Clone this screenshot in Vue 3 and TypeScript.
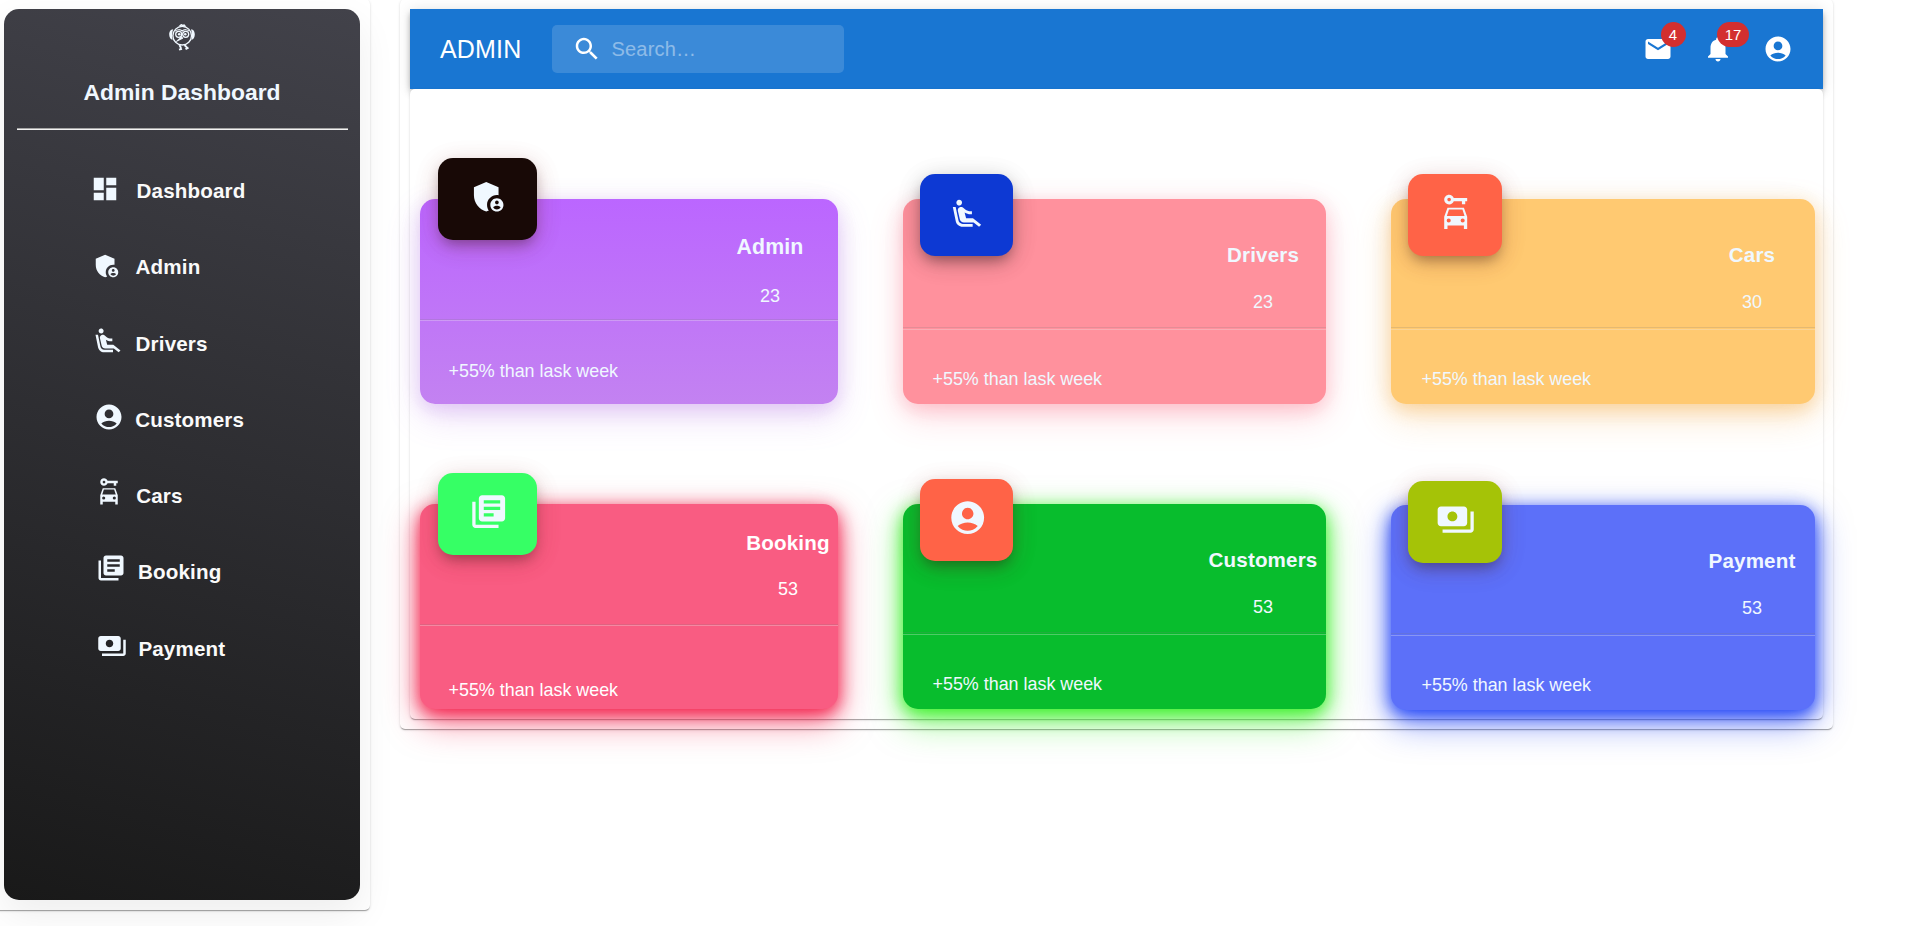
<script setup lang="ts">
interface NavItem {
  key: string
  label: string
  icon: string
}

interface StatCard {
  key: string
  title: string
  value: number
  note: string
  icon: string
}

const icons: Record<string, string> = {
  dashboard: 'M3 13h8V3H3v10zm0 8h8v-6H3v6zm10 0h8V11h-8v10zm0-18v6h8V3h-8z',
  admin:
    'M17 11c.34 0 .67.04 1 .09V6.27L10.5 3 3 6.27v4.91c0 4.54 3.2 8.79 7.5 9.82.55-.13 1.08-.32 1.6-.55-.69-.98-1.1-2.17-1.1-3.45 0-3.31 2.69-6 6-6zM17 13c-2.21 0-4 1.79-4 4s1.79 4 4 4 4-1.79 4-4-1.79-4-4-4zm0 1.38c.62 0 1.12.51 1.12 1.12s-.51 1.12-1.12 1.12-1.12-.51-1.12-1.12.5-1.12 1.12-1.12zm0 5.37c-.93 0-1.74-.46-2.24-1.17.05-.72 1.51-1.08 2.24-1.08s2.19.36 2.24 1.08c-.5.71-1.31 1.17-2.24 1.17z',
  drivers:
    'M5.35 5.64c-.9-.64-1.12-1.88-.49-2.79.63-.9 1.88-1.12 2.79-.49.9.64 1.12 1.88.49 2.79-.64.9-1.88 1.12-2.79.49zM16 19H8.93c-1.48 0-2.74-1.08-2.96-2.54L4 7H2l1.99 9.76C4.37 19.2 6.47 21 8.94 21H16v-2zm.23-4h-4.88l-1.03-4.1c1.58.89 3.28 1.54 5.15 1.22V9.99c-1.63.31-3.44-.27-4.69-1.25L9.14 7.47c-.23-.18-.49-.3-.76-.38-.32-.09-.66-.12-.99-.06h-.02c-1.23.22-2.05 1.39-1.84 2.61l1.35 5.92C7.16 16.98 8.39 18 9.83 18h6.85l3.82 3 1.5-1.5-5.77-4.5z',
  customers:
    'M12 2C6.48 2 2 6.48 2 12s4.48 10 10 10 10-4.48 10-10S17.52 2 12 2zm0 4c1.93 0 3.5 1.57 3.5 3.5S13.93 13 12 13s-3.5-1.57-3.5-3.5S10.07 6 12 6zm0 14c-2.03 0-4.43-.82-6.14-2.88C7.55 15.8 9.68 15 12 15s4.45.8 6.14 2.12C16.43 19.18 14.03 20 12 20z',
  cars:
    'M10.83 3C10.41 1.83 9.3 1 8 1 6.34 1 5 2.34 5 4s1.34 3 3 3c1.3 0 2.41-.84 2.83-2H15.8v1.9h2V5H19V3zM8 5.1c-.6 0-1.1-.5-1.1-1.1S7.4 2.9 8 2.9s1.1.5 1.1 1.1S8.6 5.1 8 5.1zM17 9H7L5 14.5V22h2v-2.2h10V22h2v-7.5zM7.9 10h8.2l1.3 4H6.6zM7.75 18a1.25 1.25 0 1 1 0-2.5 1.25 1.25 0 0 1 0 2.5zm8.5 0a1.25 1.25 0 1 1 0-2.5 1.25 1.25 0 0 1 0 2.5z',
  booking:
    'M4 6H2v14c0 1.1.9 2 2 2h14v-2H4V6zm16-4H8c-1.1 0-2 .9-2 2v12c0 1.1.9 2 2 2h12c1.1 0 2-.9 2-2V4c0-1.1-.9-2-2-2zm-1 9H9V9h10v2zm-4 4H9v-2h6v2zm4-8H9V5h10v2z',
  payment:
    'M19 14V6c0-1.1-.9-2-2-2H3c-1.1 0-2 .9-2 2v8c0 1.1.9 2 2 2h14c1.1 0 2-.9 2-2zm-9-1c-1.66 0-3-1.34-3-3s1.34-3 3-3 3 1.34 3 3-1.34 3-3 3zm13-6v11c0 1.1-.9 2-2 2H4v-2h17V7h2z',
  search:
    'M15.5 14h-.79l-.28-.27C15.41 12.59 16 11.11 16 9.5 16 5.91 13.09 3 9.5 3S3 5.91 3 9.5 5.91 16 9.5 16c1.61 0 3.09-.59 4.23-1.57l.27.28v.79l5 4.99L20.49 19l-4.99-5zm-6 0C7.01 14 5 11.99 5 9.5S7.01 5 9.5 5 14 7.01 14 9.5 11.99 14 9.5 14z',
  mail: 'M20 4H4c-1.1 0-1.99.9-1.99 2L2 18c0 1.1.9 2 2 2h16c1.1 0 2-.9 2-2V6c0-1.1-.9-2-2-2zm0 4-8 5-8-5V6l8 5 8-5v2z',
  bell: 'M12 22c1.1 0 2-.9 2-2h-4c0 1.1.89 2 2 2zm6-6v-5c0-3.07-1.64-5.64-4.5-6.32V4c0-.83-.67-1.5-1.5-1.5s-1.5.67-1.5 1.5v.68C7.63 5.36 6 7.92 6 11v5l-2 2v1h16v-1l-2-2z',
}

const navItems: NavItem[] = [
  { key: 'dashboard', label: 'Dashboard', icon: icons.dashboard },
  { key: 'admin', label: 'Admin', icon: icons.admin },
  { key: 'drivers', label: 'Drivers', icon: icons.drivers },
  { key: 'customers', label: 'Customers', icon: icons.customers },
  { key: 'cars', label: 'Cars', icon: icons.cars },
  { key: 'booking', label: 'Booking', icon: icons.booking },
  { key: 'payment', label: 'Payment', icon: icons.payment },
]

const note = '+55% than lask week'
const cards: StatCard[] = [
  { key: 'admin', title: 'Admin', value: 23, note, icon: icons.admin },
  { key: 'drivers', title: 'Drivers', value: 23, note, icon: icons.drivers },
  { key: 'cars', title: 'Cars', value: 30, note, icon: icons.cars },
  { key: 'booking', title: 'Booking', value: 53, note, icon: icons.booking },
  { key: 'customers', title: 'Customers', value: 53, note, icon: icons.customers },
  { key: 'payment', title: 'Payment', value: 53, note, icon: icons.payment },
]
</script>

<template>
  <div class="page">
    <aside class="paper side-paper">
      <div class="sidebar">
        <svg class="logo" viewBox="0 0 26 27" fill="none" stroke="currentColor">
          <path d="M10.500 2.400 12.300.8l1.200.7 1.600-.4 1.400 1.700" stroke-width="1.500" />
          <circle cx="13.200" cy="11.700" r="9.300" stroke-width="1.300" />
          <path
            d="M4.200 5.200C1.400 5.400.2 8 .2 10.500S1.300 15.600 3.600 15.800C2.800 12.400 2.900 8.500 4.200 5.200zM22 5.200c2.700.2 3.800 2.800 3.800 5.300s-1.100 5.100-3.300 5.300c.7-3.400.6-7.300-.5-10.600z"
            fill="currentColor"
            stroke="none"
          />
          <path d="M6 7.200C8 5.200 11.500 5.200 13.200 7c1.700-1.800 5.200-1.800 7 .2" stroke-width="1.100" />
          <circle cx="9.700" cy="10.300" r="3" stroke-width="1.300" />
          <circle cx="16.700" cy="10.300" r="3" stroke-width="1.300" />
          <circle cx="10.200" cy="10.300" r="1.300" fill="currentColor" stroke="none" />
          <circle cx="16.300" cy="10.300" r="1.300" fill="currentColor" stroke="none" />
          <path d="M12.300 12.500 7.300 17.500l6.700-3.300z" fill="currentColor" stroke-width=".8" />
          <path d="m10.500 21 1.500 3.200m-2 1.500 3-.9M15.500 21l2.500 2.600m-1.500 1.600 3-1.600" stroke-width="1.900" />
        </svg>
        <h1 class="brand">Admin Dashboard</h1>
        <div class="brand-rule"></div>
        <nav class="nav">
          <a v-for="item in navItems" :key="item.key" class="nav-item" :class="`nav-${item.key}`">
            <svg class="nav-icon" viewBox="0 0 24 24"><path :d="item.icon" fill-rule="evenodd" /></svg>
            <span class="nav-label">{{ item.label }}</span>
          </a>
        </nav>
      </div>
    </aside>

    <main class="paper main-paper">
      <header class="app-bar">
        <div class="app-title">ADMIN</div>
        <label class="search">
          <svg class="icon" viewBox="0 0 24 24"><path :d="icons.search" /></svg>
          <input class="search-input" type="text" placeholder="Search…" aria-label="search" />
        </label>
        <div class="actions">
          <button class="icon-button" type="button" aria-label="mails">
            <svg class="icon" viewBox="0 0 24 24"><path :d="icons.mail" /></svg>
            <span class="badge">4</span>
          </button>
          <button class="icon-button" type="button" aria-label="notifications">
            <svg class="icon" viewBox="0 0 24 24"><path :d="icons.bell" /></svg>
            <span class="badge badge-wide">17</span>
          </button>
          <button class="icon-button" type="button" aria-label="account">
            <svg class="icon" viewBox="0 0 24 24"><path :d="icons.customers" /></svg>
          </button>
        </div>
      </header>

      <section class="paper cards">
        <article v-for="card in cards" :key="card.key" class="card" :class="`card-${card.key}`">
          <div class="tile">
            <svg class="tile-icon" viewBox="0 0 24 24"><path :d="card.icon" fill-rule="evenodd" /></svg>
          </div>
          <div class="stat">
            <h2 class="stat-title">{{ card.title }}</h2>
            <span class="stat-value">{{ card.value }}</span>
          </div>
          <div class="rule"></div>
          <p class="note">{{ card.note }}</p>
        </article>
      </section>
    </main>
  </div>
</template>

<style>
body {
  margin: 0;
  background: #fff;
}
</style>

<style scoped>
.page {
  display: flex;
  align-items: flex-start;
  gap: 30px;
  box-sizing: border-box;
  height: 926px;
  overflow: hidden;
  font-family: 'Liberation Sans', Arial, sans-serif;
}

.paper {
  box-sizing: border-box;
  background: #fff;
  border-radius: 5px;
  box-shadow:
    0 2px 1px -1px rgba(0, 0, 0, 0.2),
    0 1px 1px 0 rgba(0, 0, 0, 0.14),
    0 1px 3px 0 rgba(0, 0, 0, 0.12);
}

.side-paper {
  flex: none;
  width: 376px;
  height: 911px;
  margin: -1px 0 0 -6px;
  padding: 10px;
}

.sidebar {
  display: flex;
  flex-direction: column;
  align-items: center;
  box-sizing: border-box;
  height: 891px;
  padding-top: 15px;
  border-radius: 15px;
  color: #f0f8ff;
  background: linear-gradient(195deg, #42424a, #191919);
  box-shadow: 0 15px 38px rgba(0, 0, 0, 0.07);
}

.logo {
  width: 26px;
  height: 27px;
}

.brand {
  margin: 27px 0 0;
  font-size: 22.9px;
  line-height: 28px;
  font-weight: 700;
}

.brand-rule {
  width: 331px;
  height: 0;
  margin-top: 22px;
  border-top: 1px solid #a5a5a5;
  border-bottom: 1px solid #f2f2f2;
}

.nav {
  align-self: stretch;
  padding-top: 23px;
}

.nav-item {
  --indent: 86px;
  --icon-top: 20px;
  --gap: 13px;
  display: flex;
  align-items: flex-start;
  gap: var(--gap);
  height: 76.25px;
  padding-left: var(--indent);
}

.nav-icon {
  flex: none;
  width: 30px;
  height: 30px;
  margin-top: var(--icon-top);
  fill: #f0f8ff;
}

.nav-label {
  margin-top: 26px;
  font-size: 20.6px;
  line-height: 24px;
  font-weight: 700;
  letter-spacing: 0.15px;
  color: #fafafa;
}

.nav-dashboard { --indent: 86px; --icon-top: 20.5px; --gap: 16.5px; }
.nav-admin { --indent: 87.6px; --icon-top: 22px; --gap: 14px; }
.nav-drivers { --indent: 89.2px; --icon-top: 20.3px; --gap: 12.4px; }
.nav-customers { --indent: 90px; --icon-top: 20px; --gap: 11.2px; }
.nav-cars { --indent: 90px; --icon-top: 19.4px; --gap: 12.2px; }
.nav-booking { --indent: 92.2px; --icon-top: 18.6px; --gap: 11.8px; }
.nav-payment { --indent: 93.2px; --icon-top: 20.6px; --gap: 11.2px; }

.main-paper {
  flex: none;
  width: 1433px;
  height: 730px;
  margin-top: -1px;
  padding: 10px;
}

.app-bar {
  display: flex;
  align-items: center;
  box-sizing: border-box;
  height: 80px;
  padding: 0 15px 0 30px;
  color: #fff;
  background: #1976d2;
  box-shadow:
    0 2.5px 5px -1.25px rgba(0, 0, 0, 0.2),
    0 5px 6.25px 0 rgba(0, 0, 0, 0.14),
    0 1.25px 12.5px 0 rgba(0, 0, 0, 0.12);
}

.app-title {
  width: 112px;
  font-size: 25px;
  line-height: 40px;
  letter-spacing: 0.19px;
}

.search {
  display: flex;
  align-items: center;
  gap: 9.5px;
  box-sizing: border-box;
  width: 292px;
  height: 48px;
  padding: 0 10px 0 20px;
  border-radius: 5px;
  background: rgba(255, 255, 255, 0.15);
}

.icon {
  display: block;
  flex: none;
  width: 30px;
  height: 30px;
  fill: currentColor;
}

.search-input {
  flex: 1;
  min-width: 0;
  height: 29px;
  padding: 0;
  border: 0;
  outline: 0;
  font: 20px 'Liberation Sans', Arial, sans-serif;
  letter-spacing: 0.19px;
  color: inherit;
  background: none;
}

.search-input::placeholder {
  color: #fff;
  opacity: 0.42;
}

.actions {
  display: flex;
  margin-left: auto;
}

.icon-button {
  position: relative;
  width: 60px;
  height: 60px;
  padding: 15px;
  border: 0;
  color: inherit;
  background: none;
}

.badge {
  position: absolute;
  top: 2.5px;
  right: 2.5px;
  box-sizing: border-box;
  min-width: 25px;
  height: 25px;
  border-radius: 12.5px;
  font: 500 15px/25px 'Liberation Sans', Arial, sans-serif;
  text-align: center;
  background: #d32f2f;
}

.badge-wide {
  right: -1px;
  min-width: 32px;
}

.cards {
  position: relative;
  display: grid;
  grid-template-columns: 418px 423px 424px;
  grid-auto-rows: 205px;
  gap: 100px 65px;
  height: 630px;
  padding: 110px 8px 10px 10px;
}

.card {
  --stat-width: 126px;
  --stat-top: 44px;
  --stat-gap: 25px;
  --stat-height: 128px;
  --note-top: 39px;
  --note-left: 29.5px;
  --tile-left: 17px;
  --tile-top: -25px;
  --tile-width: 94px;
  --tile-shadow: 244, 67, 54;
  --icon-size: 39.4px;
  --icon-left: 27.6px;
  --icon-top: 19px;
  position: relative;
  display: flex;
  flex-direction: column;
  align-items: flex-end;
  border-radius: 15px;
  color: #f0f8ff;
  background: var(--fill);
  box-shadow:
    0 13px 35px rgba(var(--glow), var(--glow-alpha)),
    0 5px 18px rgba(var(--glow), var(--edge-alpha)),
    0 0 45px rgba(0, 0, 0, 0.02);
}

.tile {
  position: absolute;
  left: var(--tile-left);
  top: var(--tile-top);
  box-sizing: border-box;
  width: var(--tile-width);
  height: 82px;
  padding: var(--icon-top) 0 0 var(--icon-left);
  border-radius: 15px;
  background: var(--tile-fill);
  box-shadow:
    0 5px 25px rgba(var(--tile-shadow), 0.14),
    0 6px 28px rgba(0, 0, 0, 0.1),
    0 7px 14px -4px rgba(0, 0, 0, 0.36);
}

.tile-icon {
  display: block;
  width: var(--icon-size);
  height: var(--icon-size);
  fill: #f0f8ff;
}

.stat {
  display: flex;
  flex-direction: column;
  align-items: center;
  gap: var(--stat-gap);
  box-sizing: border-box;
  width: var(--stat-width);
  height: var(--stat-height);
  padding-top: var(--stat-top);
}

.stat-title {
  margin: 0;
  font-size: 20.6px;
  line-height: 24px;
  font-weight: 700;
  letter-spacing: 0.15px;
}

.stat-value {
  font-size: 18px;
  line-height: 20px;
}

.rule {
  align-self: stretch;
  height: 1px;
  border-top: 1px solid rgba(120, 120, 120, 0.2);
  border-bottom: 1px solid rgba(238, 238, 238, 0.3);
}

.note {
  align-self: flex-start;
  margin: var(--note-top) 0 0 var(--note-left);
  font-size: 17.9px;
  line-height: 20px;
}

.card-admin {
  --fill: linear-gradient(180deg, #bb66ff, #c382f1);
  --glow: 170, 90, 230;
  --glow-alpha: 0.2;
  --edge-alpha: 0.22;
  --tile-fill: #180906;
  --tile-left: 18px;
  --tile-top: -41px;
  --tile-width: 99px;
  --icon-left: 31px;
  --stat-width: 136px;
  --stat-top: 36px;
  --stat-gap: 27px;
  --stat-height: 120px;
  --note-top: 40px;
  --note-left: 28.5px;
}

.card-admin .stat-title {
  font-size: 21.3px;
}

.card-admin .rule,
.card-booking .rule {
  height: 0;
}

.card-drivers {
  --fill: #ff919d;
  --glow: 255, 80, 110;
  --glow-alpha: 0.2;
  --edge-alpha: 0.24;
  --tile-fill: #0d39d3;
  --tile-width: 93px;
  --tile-shadow: 0, 0, 0;
  --icon-size: 34px;
  --icon-left: 30px;
  --icon-top: 23px;
}

.card-cars {
  --fill: #ffc971;
  --glow: 245, 155, 30;
  --glow-alpha: 0.24;
  --edge-alpha: 0.3;
  --tile-fill: #ff6347;
  --note-left: 30.5px;
}

.card-booking {
  --fill: #f95c82;
  --glow: 244, 20, 66;
  --glow-alpha: 0.5;
  --edge-alpha: 0.95;
  --tile-fill: #36ff65;
  --tile-left: 18px;
  --tile-top: -31px;
  --tile-width: 99px;
  --icon-left: 31px;
  --stat-width: 100px;
  --stat-top: 27px;
  --stat-gap: 24px;
  --stat-height: 120px;
  --note-top: 54px;
  --note-left: 28.5px;
  color: #fff;
}

.card-customers {
  --fill: #08bd2d;
  --glow: 45, 242, 25;
  --glow-alpha: 0.5;
  --edge-alpha: 0.9;
  --tile-fill: #ff6347;
  --tile-width: 93px;
}

.card-payment {
  --fill: #5c70f9;
  --glow: 20, 58, 248;
  --glow-alpha: 0.5;
  --edge-alpha: 0.95;
  --tile-fill: #a5c307;
  --tile-top: -24px;
  --icon-top: 18.5px;
  --note-left: 30.5px;
  top: 1px;
}
</style>
